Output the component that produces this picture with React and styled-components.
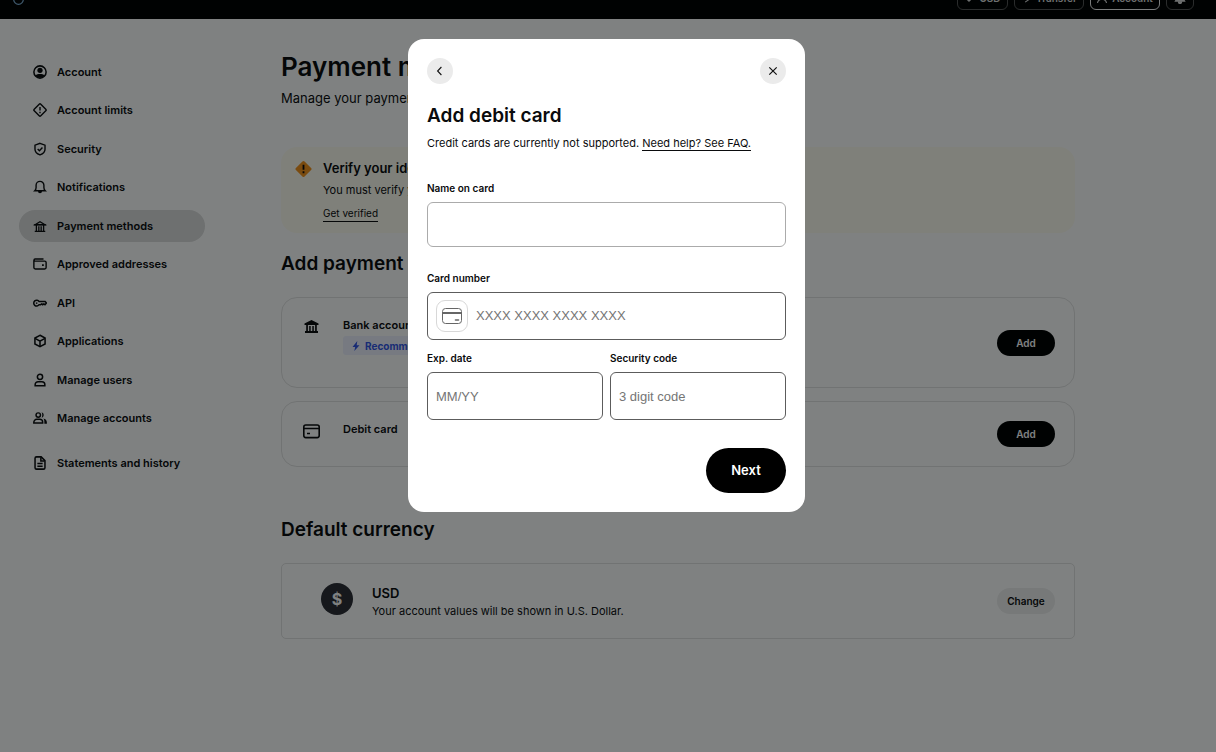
import React from 'react'
import styled, { createGlobalStyle, css } from 'styled-components'

const GlobalStyle = createGlobalStyle`
  *, *::before, *::after {
    box-sizing: border-box;
  }

  body {
    margin: 0;
    background: #fff;
    color: #0a0b0d;
    font-family: Inter, "Liberation Sans", sans-serif;
    font-size: 11px;
  }

  h1, h2, h3, p, ul {
    margin: 0;
    padding: 0;
  }

  button, input {
    font-family: inherit;
  }
`

const TopBar = styled.header`
  display: flex;
  align-items: flex-end;
  justify-content: space-between;
  height: 19px;
  padding: 0 22px 9px 13px;
  overflow: hidden;
  background: #000;
`

const LogoLink = styled.a`
  display: flex;
  height: 16px;
`

const TopActions = styled.div`
  display: flex;
  gap: 6px;
`

const TopButton = styled.button`
  display: flex;
  align-items: center;
  justify-content: center;
  gap: 5px;
  width: ${({ $width }) => $width}px;
  height: 26px;
  padding: 2px 0 0;
  border: 1px solid ${({ $active }) => ($active ? '#f4f4f4' : '#555')};
  border-radius: 6px;
  background: none;
  color: #ddd;
  font-size: 10px;
  font-weight: 600;
  line-height: 16px;
`

const Layout = styled.div`
  display: flex;
  align-items: flex-start;
  gap: 76px;
  padding: 32px 19px 60px;
`

const Sidebar = styled.nav`
  flex: none;
  display: flex;
  flex-direction: column;
  gap: 13px;
  width: 186px;
  padding-top: 5px;
`

const NavGroup = styled.ul`
  display: flex;
  flex-direction: column;
  justify-content: space-between;
  height: ${({ $height }) => $height}px;
  list-style: none;
`

const NavLink = styled.a`
  display: flex;
  align-items: center;
  gap: 10px;
  height: 32px;
  padding: 0 14px;
  border-radius: 16px;
  background: ${({ $active }) => ($active ? '#dcdcdc' : 'none')};
  color: inherit;
  font-size: 11px;
  font-weight: 600;
  line-height: 16px;
  text-decoration: none;
`

const Main = styled.main`
  flex: 1;
  min-width: 0;
  max-width: 794px;
`

const PageTitle = styled.h1`
  font-size: 26px;
  font-weight: 600;
  line-height: 32px;
`

const PageText = styled.p`
  margin-top: 5px;
  font-size: 13px;
  line-height: 20px;
`

const Banner = styled.section`
  display: flex;
  gap: 11px;
  margin-top: 39px;
  padding: 11px 14px;
  border-radius: 16px;
  background: #fffcf1;
`

const BannerBody = styled.div`
  display: flex;
  flex-direction: column;
  align-items: flex-start;
  gap: 3px;
`

const BannerTitle = styled.h3`
  font-size: 13px;
  font-weight: 600;
  line-height: 20px;
`

const BannerText = styled.p`
  line-height: 18px;
`

const TextLink = styled.a`
  border-bottom: 1px solid #0a0b0d;
  color: inherit;
  line-height: 16px;
  text-decoration: none;
`

const BannerLink = styled(TextLink)`
  margin-top: 3px;
  font-size: 10px;
`

const SectionTitle = styled.h2`
  margin-top: ${({ $top }) => $top}px;
  margin-bottom: 20px;
  font-size: 19px;
  font-weight: 600;
  line-height: 26px;
`

const MethodList = styled.div`
  display: flex;
  flex-direction: column;
  gap: 13px;
`

const Card = styled.article`
  display: flex;
  align-items: flex-start;
  gap: ${({ $round }) => ($round ? 23 : 19)}px;
  padding: 19px 19px 19px ${({ $round }) => ($round ? 21 : 39)}px;
  border: 1px solid #e2e2e2;
  border-radius: ${({ $round }) => ($round ? 16 : 5)}px;
`

const CardIcon = styled.span`
  display: flex;
  padding-top: 1px;
`

const CardBody = styled.div`
  flex: 1;
  display: flex;
  flex-direction: column;
  align-items: flex-start;
  gap: 3px;
  padding-bottom: ${({ $tall }) => ($tall ? 13 : 0)}px;
`

const CardTitle = styled.h3`
  font-size: 11px;
  font-weight: 600;
  line-height: 16px;
`

const Tag = styled.span`
  display: flex;
  align-items: center;
  gap: 4px;
  height: 19px;
  padding: 0 8px;
  border-radius: 3px;
  background: #eef1ff;
  color: #3355e6;
  font-size: 10px;
  font-weight: 700;
`

const pill = css`
  align-self: center;
  width: 58px;
  height: 26px;
  padding: 0;
  border: 0;
  border-radius: 13px;
  font-size: 10px;
  font-weight: 600;
  line-height: 16px;
`

const AddButton = styled.button`
  ${pill}
  background: #000;
  color: #fff;
`

const ChangeButton = styled.button`
  ${pill}
  background: #eee;
  color: #0a0b0d;
`

const Coin = styled.span`
  display: flex;
  align-items: center;
  justify-content: center;
  width: 32px;
  height: 32px;
  border-radius: 50%;
  background: #2c2d35;
  color: #fff;
  font-size: 16px;
  font-weight: 700;
`

const CurrencyBody = styled.div`
  flex: 1;
`

const CurrencyName = styled.h3`
  font-size: 13px;
  font-weight: 600;
  line-height: 20px;
`

const CurrencyText = styled.p`
  line-height: 16px;
`

const Overlay = styled.div`
  position: fixed;
  inset: 0;
  display: flex;
  align-items: flex-start;
  justify-content: center;
  padding: 39px 3px 0 0;
  background: rgba(0, 4, 3, 0.5);
`

const Dialog = styled.section`
  width: 397px;
  max-width: 100%;
  padding: 19px;
  border-radius: 16px;
  background: #fff;
`

const DialogBar = styled.div`
  display: flex;
  justify-content: space-between;
`

const RoundButton = styled.button`
  display: flex;
  align-items: center;
  justify-content: center;
  width: 26px;
  height: 26px;
  padding: 0;
  border: 0;
  border-radius: 50%;
  background: #ebebeb;
  color: #111;
`

const DialogTitle = styled.h2`
  margin-top: 20px;
  font-size: 19px;
  font-weight: 600;
  line-height: 24px;
`

const DialogText = styled.p`
  margin-top: 6px;
  line-height: 18px;
`

const Field = styled.div`
  flex: 1;
  display: flex;
  flex-direction: column;
  gap: 7px;
  min-width: 0;
  margin-top: ${({ $top }) => $top}px;
`

const FieldRow = styled.div`
  display: flex;
  gap: 7px;
  margin-top: 11px;
`

const Label = styled.label`
  font-size: 10px;
  font-weight: 600;
  line-height: 14px;
`

const input = css`
  width: 100%;
  font-family: "Liberation Sans", Arial, sans-serif;
  font-size: 13px;
  line-height: 18px;

  &::placeholder {
    color: #757575;
  }
`

const TextInput = styled.input`
  ${input}
  height: ${({ $light }) => ($light ? 45 : 48)}px;
  padding: 0 8px;
  border: 1px solid ${({ $light }) => ($light ? '#ababab' : '#5c5c5c')};
  border-radius: 6px;
`

const CardNumberBox = styled.div`
  display: flex;
  align-items: center;
  gap: 8px;
  height: 48px;
  padding: 0 8px;
  border: 1px solid #5c5c5c;
  border-radius: 6px;
`

const CardNumberInput = styled.input`
  ${input}
  padding: 0;
  border: 0;
  outline: 0;
`

const CardBrand = styled.span`
  flex: none;
  display: flex;
  align-items: center;
  justify-content: center;
  width: 32px;
  height: 32px;
  border: 1px solid #d8d8d8;
  border-radius: 9px;
`

const DialogActions = styled.div`
  display: flex;
  justify-content: flex-end;
  margin-top: 28px;
`

const NextButton = styled.button`
  width: 80px;
  height: 45px;
  padding: 0 0 2px;
  border: 0;
  border-radius: 23px;
  background: #000;
  color: #fff;
  font-size: 13px;
  font-weight: 600;
`

const Icon = ({ size = 14, stroke = 2.6, children }) => (
  <svg
    width={size}
    height={size}
    viewBox="0 0 24 24"
    fill="none"
    stroke="currentColor"
    strokeWidth={stroke}
    aria-hidden="true"
  >
    {children}
  </svg>
)

const AccountIcon = () => (
  <Icon>
    <circle cx="12" cy="12" r="10.5" />
    <circle cx="12" cy="9" r="4.5" fill="currentColor" stroke="none" />
    <path d="M4 18c4-3.4 12-3.4 16 0-3 5-13 5-16 0z" fill="currentColor" stroke="none" />
  </Icon>
)

const LimitsIcon = () => (
  <Icon stroke={2.4}>
    <path d="M10.6 2.1 2.1 10.6a2 2 0 0 0 0 2.8l8.5 8.5a2 2 0 0 0 2.8 0l8.5-8.5a2 2 0 0 0 0-2.8l-8.5-8.5a2 2 0 0 0-2.8 0z" />
    <path d="M12 7v6M12 14.8v2.6" />
  </Icon>
)

const SecurityIcon = () => (
  <Icon stroke={2.4}>
    <path d="m12 2.2 8.6 3.2v7.2c0 5.2-4 8-8.6 9.6-4.6-1.6-8.6-4.4-8.6-9.6V5.4z" />
    <path d="m8 12 3 3 5.2-5.6" />
  </Icon>
)

const BellIcon = () => (
  <Icon stroke={2.4}>
    <path d="M3 18.5h18c-1.8-1.6-2.3-3-2.3-5.5V9a6.7 6.7 0 0 0-13.4 0v4c0 2.500-.5 3.900-2.300 5.500z" />
    <path d="M8.5 19a3.5 3.8 0 0 0 7 0z" fill="currentColor" stroke="none" />
  </Icon>
)

const BankIcon = () => (
  <Icon stroke={2.2}>
    <path d="M3.5 9.8 12 4.6l8.5 5.2z" />
    <path d="M1.5 10h21M5.8 10v10M10 12.5V20M14 12.5V20M18.2 10v10M3 21.2h18" />
  </Icon>
)

const WalletIcon = () => (
  <Icon stroke={2.4}>
    <path d="M1.5 5.5V18A2.5 2.5 0 0 0 4 20.5h16a2.5 2.5 0 0 0 2.5-2.5V9.5A2.5 2.5 0 0 0 20 7H3.5a1.7 1.7 0 0 1 0-3.5H18" />
    <path d="M15.5 12.5h3v3h-3z" fill="currentColor" stroke="none" />
  </Icon>
)

const KeyIcon = () => (
  <Icon stroke={2.6}>
    <path d="M10.5 9.5h10.3l2.200 2.500-2.500 2.900-2-1.300-1.800 1.300-1.800-1.300-1.800 1.300h-2.600A5 5 0 1 1 10.500 9.500z" />
    <path d="M5 11h2.5v2.5H5z" fill="currentColor" stroke="none" />
  </Icon>
)

const CubeIcon = () => (
  <Icon stroke={2.6}>
    <path d="m12 2.2 8.7 4.6v10.400L12 21.800l-8.700-4.600V6.800z" />
    <path d="m3.5 7.5 8.5 4.8 8.5-4.8M12 12.3v9.2" />
  </Icon>
)

const UserIcon = () => (
  <Icon stroke={2.6}>
    <circle cx="12" cy="6.5" r="4.5" />
    <path d="M3.7 22v-2.200a5 5 0 0 1 5-5h6.600a5 5 0 0 1 5 5V22z" />
  </Icon>
)

const UsersIcon = () => (
  <Icon stroke={2.5}>
    <circle cx="9" cy="7" r="3.8" />
    <path d="M1.400 20.500v-1.200a5 5 0 0 1 5-5h5.200a5 5 0 0 1 5 5v1.200z" />
    <path d="M14.8 2.2a5 5 0 0 1 0 9.6c1.5-2.8 1.5-6.8 0-9.6zM17.8 13c3.6.8 6 3 6 6.500v2.200h-4.300v-3c0-2.400-.5-4-1.700-5.700z" fill="currentColor" stroke="none" />
  </Icon>
)

const DocumentIcon = () => (
  <Icon stroke={2.6}>
    <path d="M14 1.5H6A2.5 2.5 0 0 0 3.5 4v16A2.5 2.5 0 0 0 6 22.5h12a2.5 2.5 0 0 0 2.5-2.5V8z" />
    <path d="M13.5 2v6.500H20M7.500 13h9M7.500 17.500h9" />
  </Icon>
)

const WarningIcon = () => (
  <svg width="17" height="22" viewBox="0 0 17 22" aria-hidden="true">
    <rect x="2.4" y="4.900" width="12.2" height="12.2" rx="1.5" transform="rotate(45 8.500 11)" fill="#f5921b" />
    <path d="M8.5 6.700v5M8.500 13.300v2" stroke="#0a0b0d" strokeWidth="1.800" />
  </svg>
)

const BankSolidIcon = () => (
  <svg width="17" height="17" viewBox="0 0 17 17" fill="currentColor" aria-hidden="true">
    <path d="M8.5 2 15.5 5.6V7h-14V5.6zM3.2 7h1.7v6H3.2zM6.2 8h1.500v5H6.200zM9.300 8h1.500v5H9.300zM12.100 7h1.700v6h-1.700zM2 13h13v2H2z" />
  </svg>
)

const DebitIcon = () => (
  <svg width="17" height="17" viewBox="0 0 17 17" fill="none" stroke="currentColor" aria-hidden="true">
    <rect x=".8" y="3" width="15.4" height="12.6" rx="2" strokeWidth="1.6" />
    <path d="M1 6.5h15M4 11.5h3" strokeWidth="1.6" />
  </svg>
)

const BoltIcon = () => (
  <svg width="10" height="10" viewBox="0 0 10 10" fill="currentColor" aria-hidden="true">
    <path d="M6.3 0 1.5 6h2.7L3.3 10 8.5 4.2H5.7z" />
  </svg>
)

const ChevronIcon = () => (
  <svg width="10" height="10" viewBox="0 0 10 10" fill="none" stroke="currentColor" strokeWidth="1.1" aria-hidden="true">
    <path d="M6.4 1 2.600 5l3.800 4" />
  </svg>
)

const CloseIcon = () => (
  <svg width="10" height="10" viewBox="0 0 10 10" fill="none" stroke="currentColor" strokeWidth="1.2" aria-hidden="true">
    <path d="m1.3 1.3 7.4 7.4M8.7 1.3 1.3 8.7" />
  </svg>
)

const BrandIcon = () => (
  <svg width="20" height="16" viewBox="0 0 20 16" fill="none" stroke="#666" aria-hidden="true">
    <rect x=".5" y=".5" width="19" height="15" rx="3" />
    <path d="M1 5h18" strokeWidth="2" />
    <path d="M13.5 12h3" strokeWidth="1.6" strokeLinecap="round" />
  </svg>
)

const navItems = [
  { label: 'Account', icon: AccountIcon },
  { label: 'Account limits', icon: LimitsIcon },
  { label: 'Security', icon: SecurityIcon },
  { label: 'Notifications', icon: BellIcon },
  { label: 'Payment methods', icon: BankIcon, active: true },
  { label: 'Approved addresses', icon: WalletIcon },
  { label: 'API', icon: KeyIcon },
  { label: 'Applications', icon: CubeIcon },
  { label: 'Manage users', icon: UserIcon },
  { label: 'Manage accounts', icon: UsersIcon },
]

const historyItems = [
  { label: 'Statements and history', icon: DocumentIcon },
]

const NavList = ({ items, height }) => (
  <NavGroup $height={height}>
    {items.map(({ label, icon: ItemIcon, active }) => (
      <li key={label}>
        <NavLink href="#" $active={active} aria-current={active ? 'page' : undefined}>
          <ItemIcon />
          {label}
        </NavLink>
      </li>
    ))}
  </NavGroup>
)

const Header = () => (
  <TopBar>
    <LogoLink href="#" aria-label="Home">
      <svg width="11" height="11" viewBox="0 0 11 11" fill="none" aria-hidden="true">
        <circle cx="5.5" cy="5.5" r="4.8" stroke="#7fb0d8" strokeWidth="1.2" />
      </svg>
    </LogoLink>
    <TopActions>
      <TopButton $width={51}>
        <Icon size={10}><path d="M12 3v17M5 13l7 7 7-7" /></Icon>
        USD
      </TopButton>
      <TopButton $width={70}>
        <Icon size={10}><path d="M4 9h16l-6-6M20 15 10 22" /></Icon>
        Transfer
      </TopButton>
      <TopButton $width={70} $active>
        <Icon size={10}>
          <circle cx="12" cy="7" r="5" />
          <path d="M1 24c3-12 19-12 22 0" />
        </Icon>
        Account
      </TopButton>
      <TopButton $width={28} aria-label="Notifications">
        <Icon size={12}>
          <path d="M3 18h18l-2.500-4V9a6.500 6.500 0 0 0-13 0v5z" fill="currentColor" />
          <path d="M9 20a3 3 0 0 0 6 0z" fill="currentColor" />
        </Icon>
      </TopButton>
    </TopActions>
  </TopBar>
)

const PaymentMethods = () => (
  <Main>
    <PageTitle>Payment methods</PageTitle>
    <PageText>Manage your payment methods</PageText>
    <Banner>
      <WarningIcon />
      <BannerBody>
        <BannerTitle>Verify your identity</BannerTitle>
        <BannerText>You must verify your identity</BannerText>
        <BannerLink href="#">Get verified</BannerLink>
      </BannerBody>
    </Banner>

    <SectionTitle $top={18}>Add payment method</SectionTitle>
    <MethodList>
      <Card $round>
        <CardIcon><BankSolidIcon /></CardIcon>
        <CardBody $tall>
          <CardTitle>Bank account</CardTitle>
          <Tag><BoltIcon />Recommended</Tag>
        </CardBody>
        <AddButton>Add</AddButton>
      </Card>
      <Card $round>
        <CardIcon><DebitIcon /></CardIcon>
        <CardBody>
          <CardTitle>Debit card</CardTitle>
        </CardBody>
        <AddButton>Add</AddButton>
      </Card>
    </MethodList>

    <SectionTitle $top={50}>Default currency</SectionTitle>
    <Card>
      <Coin>$</Coin>
      <CurrencyBody>
        <CurrencyName>USD</CurrencyName>
        <CurrencyText>Your account values will be shown in U.S. Dollar.</CurrencyText>
      </CurrencyBody>
      <ChangeButton>Change</ChangeButton>
    </Card>
  </Main>
)

const AddCardDialog = () => (
  <Overlay>
    <Dialog role="dialog" aria-modal="true" aria-labelledby="dialog-title">
      <DialogBar>
        <RoundButton aria-label="Back"><ChevronIcon /></RoundButton>
        <RoundButton aria-label="Close"><CloseIcon /></RoundButton>
      </DialogBar>
      <DialogTitle id="dialog-title">Add debit card</DialogTitle>
      <DialogText>
        Credit cards are currently not supported. <TextLink href="#">Need help? See FAQ.</TextLink>
      </DialogText>
      <form onSubmit={e => e.preventDefault()}>
        <Field $top={29}>
          <Label htmlFor="name">Name on card</Label>
          <TextInput id="name" type="text" $light />
        </Field>
        <Field $top={24}>
          <Label htmlFor="number">Card number</Label>
          <CardNumberBox>
            <CardBrand><BrandIcon /></CardBrand>
            <CardNumberInput id="number" type="text" placeholder="XXXX XXXX XXXX XXXX" />
          </CardNumberBox>
        </Field>
        <FieldRow>
          <Field>
            <Label htmlFor="expiry">Exp. date</Label>
            <TextInput id="expiry" type="text" placeholder="MM/YY" />
          </Field>
          <Field>
            <Label htmlFor="code">Security code</Label>
            <TextInput id="code" type="text" placeholder="3 digit code" />
          </Field>
        </FieldRow>
        <DialogActions>
          <NextButton type="submit">Next</NextButton>
        </DialogActions>
      </form>
    </Dialog>
  </Overlay>
)

const App = () => (
  <>
    <GlobalStyle />
    <Header />
    <Layout>
      <Sidebar aria-label="Settings">
        <NavList items={navItems} height={378} />
        <NavList items={historyItems} height={32} />
      </Sidebar>
      <PaymentMethods />
    </Layout>
    <AddCardDialog />
  </>
)

export default App
